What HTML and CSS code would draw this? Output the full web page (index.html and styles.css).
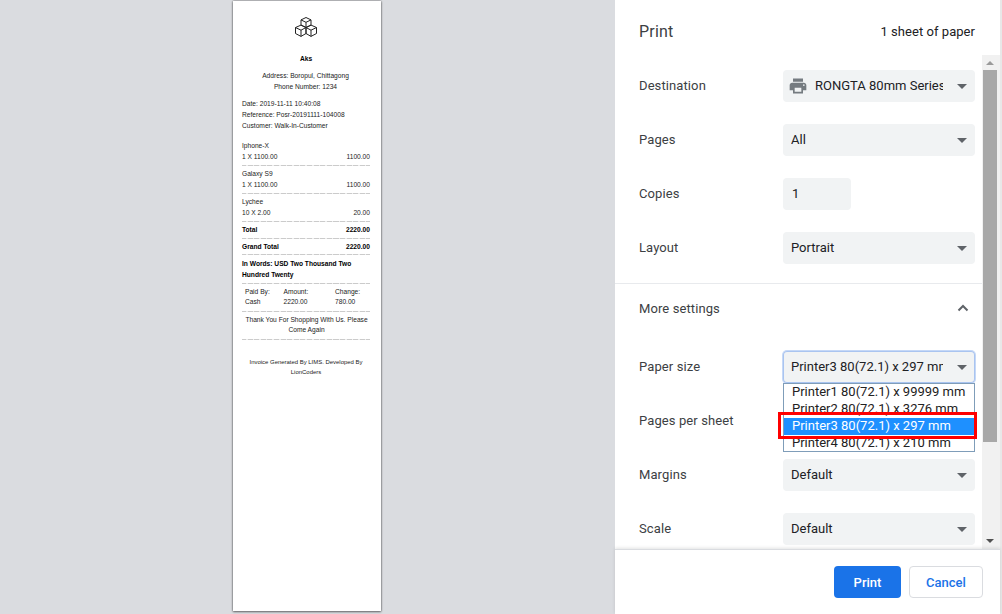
FILE: index.html
```html
<!DOCTYPE html>
<html lang="en">
<head>
<meta charset="utf-8">
<title>Print</title>
<link rel="stylesheet" href="styles.css">
</head>
<body>
<div class="app">
  <section class="preview">
    <article class="paper">
      <svg class="logo" width="24" height="22" viewBox="0 0 24 22" fill="none" stroke="#222" stroke-width="1" stroke-linejoin="round">
        <path d="M12 1.500l5 2.400v5.200l-5 2.400-5-2.400V3.900z"/><path d="M7 3.900l5 2.400 5-2.400M12 6.300v5.200"/>
        <path d="M7 9.100l5 2.400v6l-5 2.900-5.500-2.900v-6z"/><path d="M1.500 11.500l5.500 2.700 5-2.700M7 14.200v6.200"/>
        <path d="M17 9.100l5.500 2.400v6L17 20.400l-5-2.900v-6z"/><path d="M12 11.500l5 2.700 5.500-2.700M17 14.200v6.200"/>
      </svg>
      <h1 class="shop">Aks</h1>
      <p class="center addr">Address: Boropul, Chittagong</p>
      <p class="center">Phone Number: 1234</p>
      <div class="meta">
        <p>Date: 2019-11-11 10:40:08</p>
        <p>Reference: Posr-20191111-104008</p>
        <p>Customer: Walk-In-Customer</p>
      </div>
      <div class="items">
        <div class="item"><p>Iphone-X</p><p class="row"><span>1 X 1100.00</span><span>1100.00</span></p></div>
        <div class="item"><p>Galaxy S9</p><p class="row"><span>1 X 1100.00</span><span>1100.00</span></p></div>
        <div class="item"><p>Lychee</p><p class="row"><span>10 X 2.00</span><span>20.00</span></p></div>
        <p class="row total"><span>Total</span><span>2220.00</span></p>
        <p class="row total"><span>Grand Total</span><span>2220.00</span></p>
      </div>
      <p class="words">In Words: USD Two Thousand Two Hundred Twenty</p>
      <div class="paid">
        <p>Paid By:</p><p>Amount:</p><p>Change:</p>
        <p>Cash</p><p>2220.00</p><p>780.00</p>
      </div>
      <p class="center thanks">Thank You For Shopping With Us. Please Come Again</p>
      <p class="center credit">Invoice Generated By LIMS. Developed By LionCoders</p>
    </article>
  </section>

  <aside class="panel">
    <header class="head">
      <h2 class="title">Print</h2>
      <span class="sheets">1 sheet of paper</span>
    </header>
    <div class="middle">
      <div class="settings">
        <div class="group">
          <div class="field">
            <label>Destination</label>
            <div class="select dest">
              <svg class="printer" width="20" height="20" viewBox="0 0 24 24" fill="#757b80"><path d="M19 8H5c-1.660 0-3 1.340-3 3v6h4v4h12v-4h4v-6c0-1.660-1.340-3-3-3zm-3 11H8v-5h8v5zm3-7c-.550 0-1-.450-1-1s.450-1 1-1 1 .450 1 1-.450 1-1 1zm-1-9H6v4h12V3z"/></svg>
              <span class="value">RONGTA 80mm Series</span><i class="caret"></i>
            </div>
          </div>
          <div class="field"><label>Pages</label><div class="select"><span class="value">All</span><i class="caret"></i></div></div>
          <div class="field"><label>Copies</label><div class="input">1</div></div>
          <div class="field"><label>Layout</label><div class="select"><span class="value">Portrait</span><i class="caret"></i></div></div>
        </div>
        <div class="more">
          <span>More settings</span>
          <svg width="12" height="8" viewBox="0 0 12 8" fill="none" stroke="#5f6368" stroke-width="2"><path d="M1.500 6.500L6 2l4.500 4.500"/></svg>
        </div>
        <div class="group extra">
          <div class="field">
            <label>Paper size</label>
            <div class="select open">
              <span class="value">Printer3 80(72.1) x 297 mm</span><i class="caret"></i>
              <ul class="list">
                <li>Printer1 80(72.1) x 99999 mm</li>
                <li>Printer2 80(72.1) x 3276 mm</li>
                <li class="sel">Printer3 80(72.1) x 297 mm</li>
                <li>Printer4 80(72.1) x 210 mm</li>
              </ul>
              <div class="mark"></div>
            </div>
          </div>
          <div class="field"><label>Pages per sheet</label><div class="select"><span class="value">1</span><i class="caret"></i></div></div>
          <div class="field"><label>Margins</label><div class="select"><span class="value">Default</span><i class="caret"></i></div></div>
          <div class="field"><label>Scale</label><div class="select"><span class="value">Default</span><i class="caret"></i></div></div>
        </div>
      </div>
      <div class="scrollbar">
        <i class="arrow up"></i>
        <div class="thumb"></div>
        <i class="arrow down"></i>
      </div>
    </div>
    <footer class="foot">
      <button class="btn primary">Print</button>
      <button class="btn ghost">Cancel</button>
    </footer>
  </aside>
</div>
</body>
</html>
```

FILE: styles.css
```css
* { box-sizing: border-box; margin: 0; padding: 0; }
html, body { width: 100%; height: 100%; overflow: hidden; }
body { font-family: Roboto, "Liberation Sans", sans-serif; color: #3c4043; background: #fff; }
.app { display: flex; height: 614px; }

.preview { width: 615px; background: #dadce0; padding: 1px 0 0 233px; }
.paper {
  width: 148px; height: 610px; background: #fff;
  box-shadow: 0 0 2px rgba(0,0,0,.55), 0 1px 2px rgba(0,0,0,.4);
  padding: 15px 11px 0 9px;
  font-family: "Liberation Sans", Arial, sans-serif;
  font-size: 6.650px; color: #222;
  --dash: repeating-linear-gradient(90deg, #cbcbcb 0 5px, #eee 5px 6.500px) 1;
}
.logo { display: block; margin: 0 auto; }
.shop { font-size: 6.650px; line-height: 11px; font-weight: 700; text-align: center; margin-top: 15px; color: #000; }
.center { text-align: center; padding-right: 1px; }
.paper p { line-height: 11.300px; }
.addr { margin-top: 6px; }
.meta { margin-top: 5px; }
.items { margin-top: 9px; }
.paper .item p { line-height: 11px; }
.item { border-bottom: 1px solid; border-image: var(--dash); padding-bottom: 3px; margin-bottom: 2px; }
.row { display: flex; justify-content: space-between; }
.paper .total { line-height: 11px; font-weight: 700; color: #000; border-bottom: 1px solid; border-image: var(--dash); padding-bottom: 2.500px; margin-bottom: 2px; }
.paper .words { font-weight: 700; color: #000; border-bottom: 1px solid; border-image: var(--dash); padding: 2px 0 2.500px; line-height: 10.500px; }
.paid { display: grid; grid-template-columns: 38.500px 51.500px 1fr; padding: 3px 3px 3px; border-bottom: 1px solid; border-image: var(--dash); }
.paper .paid p { line-height: 10.500px; }
.thanks { padding: 3px 0 3px 1px; border-bottom: 1px solid; border-image: var(--dash); }
.paper .thanks { line-height: 10.500px; }
.paper .credit { margin-top: 17px; font-size: 5.950px; line-height: 10.500px; padding: 0 4px; }

.panel { flex: 1; display: flex; flex-direction: column; background: #fff; border-right: 2px solid #e8e8e8; }
.head { height: 55px; display: flex; justify-content: space-between; align-items: center; padding: 7px 25px 0 24px; }
.title { font-size: 16px; font-weight: 400; color: #3c4043; letter-spacing: .2px; }
.sheets { font-size: 13px; color: #202124; letter-spacing: .05px; }

.middle { height: 494px; display: flex; overflow: hidden; }
.settings { width: 367px; padding-top: 15px; }
.group { padding: 0 7px 0 24px; display: flex; flex-direction: column; gap: 22px; }
.extra { margin-top: 19px; }
.field { display: flex; align-items: center; height: 32px; }
.field label { width: 144px; font-size: 13px; color: #3c4043; letter-spacing: .1px; padding-bottom: 2px; }
.select, .input { height: 32px; border-radius: 4px; background: #f1f3f4; font-size: 13px; color: #202124; }
.select { width: 192px; position: relative; display: flex; align-items: center; padding-left: 8px; }
.value { width: 152px; white-space: nowrap; overflow: hidden; padding-bottom: 2px; }
.dest .value { width: 128px; }
.printer { margin: 0 7px 0 -3px; flex: none; }
.caret { position: absolute; right: 8px; top: 14px; width: 0; height: 0; border: 5px solid transparent; border-top: 5px solid #5f6368; border-bottom: 0; }
.input { width: 68px; padding-left: 9px; line-height: 31px; }
.open { box-shadow: inset 0 0 0 1px #a9c4f0, 0 0 0 1px #c5d8f7; }

.more { margin-top: 19px; border-top: 1px solid #e8eaed; height: 49px; display: flex; align-items: center; justify-content: space-between; padding: 0 13px 0 24px; font-size: 13px; color: #3c4043; letter-spacing: .1px; }

.list { position: absolute; left: 0; top: 32px; width: 192px; height: 69px; list-style: none; background: #fff; border: 1px solid #7f9db9; overflow: hidden; z-index: 2; font-size: 13px; }
.list li { height: 17px; line-height: 15px; padding-left: 8px; color: #222; white-space: nowrap; }
.list .sel { background: #1e90ff; color: #fff; }
.mark { position: absolute; left: -5px; top: 61px; width: 199px; height: 27px; border: 3px solid #f00; z-index: 3; }

.scrollbar { width: 18px; background: #f1f1f1; display: flex; flex-direction: column; align-items: center; padding-top: 6px; }
.thumb { width: 14px; height: 372px; background: #a8a8a8; margin-top: 5px; margin-left: -2px; flex: none; }
.arrow { width: 0; height: 0; border: 4px solid transparent; flex: none; margin-left: -2px; }
.up { border-bottom: 4px solid #9a9a9a; border-top: 0; }
.down { border-top: 4px solid #505050; border-bottom: 0; margin-top: 97px; }

.foot { height: 65px; border-top: 1px solid #dadce0; box-shadow: 0 -1px 3px rgba(60,64,67,.15); display: flex; justify-content: flex-end; align-items: flex-start; gap: 8px; padding: 16px 17px 0 0; background: #fff; position: relative; z-index: 1; }
.btn { height: 32px; border-radius: 4px; font-family: Roboto, "Liberation Sans", sans-serif; font-size: 13px; font-weight: 500; }
.primary { width: 67px; background: #1a73e8; color: #fff; border: 0; }
.ghost { width: 74px; background: #fff; color: #1a73e8; border: 1px solid #dadce0; }
```
